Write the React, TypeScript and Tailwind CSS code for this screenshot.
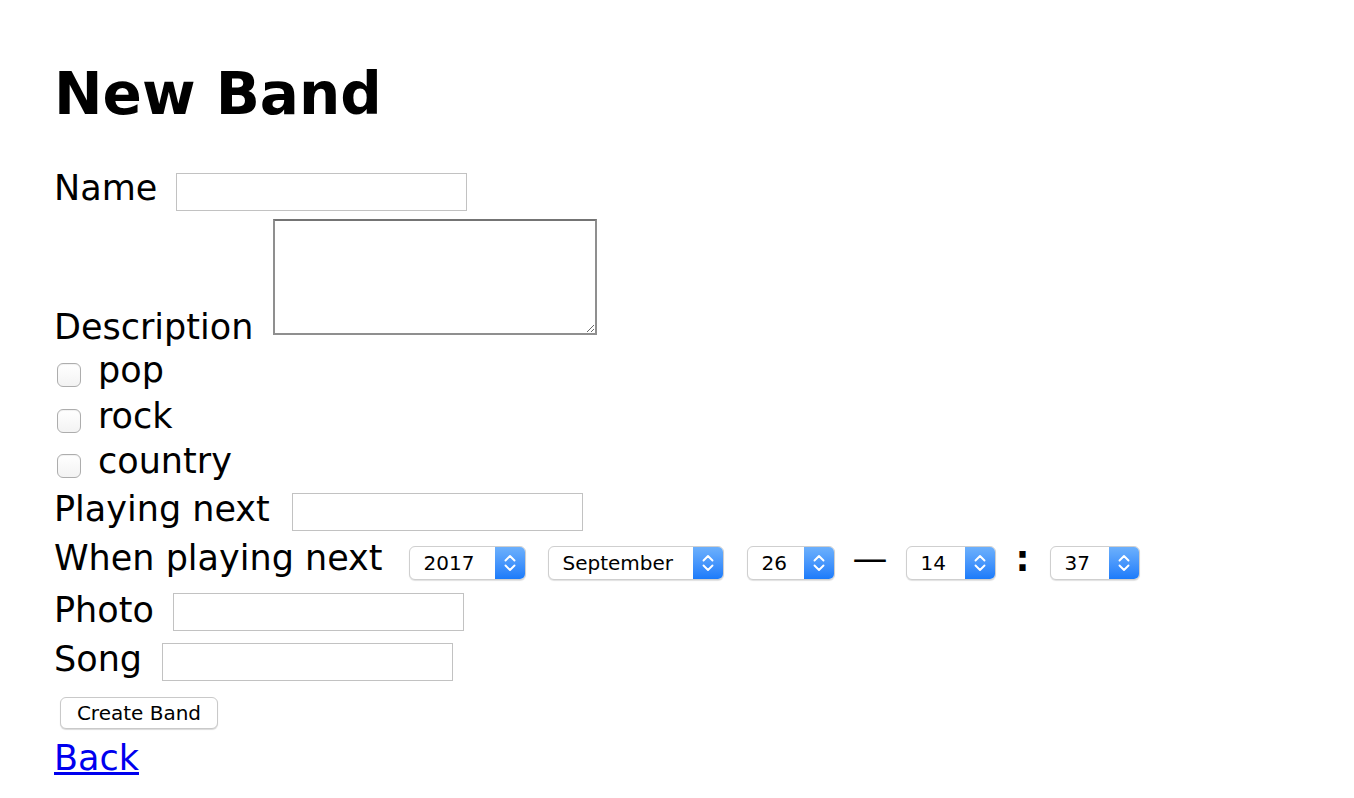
import React from "react";

function TextInput({ className = "" }: { className?: string }) {
  return (
    <input
      type="text"
      className={`h-[38px] w-[291px] border border-[#c2c2c2] bg-white px-1 outline-none ${className}`}
    />
  );
}

function Checkbox() {
  return (
    <span className="block size-[24px] rounded-[6px] border border-[#adadad] bg-gradient-to-b from-white to-[#f3f3f3] shadow-[inset_0_1px_1px_rgba(0,0,0,0.06)]" />
  );
}

function Chevrons() {
  return (
    <svg width="14" height="22" viewBox="0 0 14 22" fill="none" stroke="white" strokeWidth="1.9" strokeLinecap="round" strokeLinejoin="round">
      <path d="M2.5 8.5 L7 4 L11.5 8.5" />
      <path d="M2.5 13.5 L7 18 L11.5 13.5" />
    </svg>
  );
}

function Select({ value, w }: { value: string; w: string }) {
  return (
    <div
      className={`flex h-[34px] ${w} overflow-hidden rounded-[6px] border border-[#cfcfcf] bg-white shadow-[0_1px_1px_rgba(0,0,0,0.12)]`}
    >
      <span className="flex flex-1 items-center pl-[14px] text-[20px] text-black [font-family:'DejaVu_Sans',sans-serif]">
        {value}
      </span>
      <span className="flex w-[30px] items-center justify-center bg-gradient-to-b from-[#6cb0fc] to-[#1b7bfa]">
        <Chevrons />
      </span>
    </div>
  );
}

export default function App() {
  return (
    <div className="min-h-[798px] w-full bg-white pl-[54px] text-black [font-family:'DejaVu_Sans',Verdana,sans-serif]">
      <h1 className="pt-[60px] text-[58px] font-bold leading-[68px]">New Band</h1>

      <form className="mt-[42px] text-[35px] leading-[40px]">
        <div className="flex h-[44px] items-start">
          <label className="mt-[-2px]">Name</label>
          <TextInput className="ml-[19px] mt-[3px]" />
        </div>

        <div className="mt-[2px] flex h-[128px] items-end">
          <label className="mb-[-3px]">Description</label>
          <textarea className="mb-[9px] ml-[20px] h-[116px] w-[324px] border-2 border-[#8f8f8f] border-t-[#747474] bg-white outline-none" />
        </div>

        {[
          ["pop", "h-[46px]"],
          ["rock", "h-[45px]"],
          ["country", "h-[46px]"],
        ].map(([t, h]) => (
          <div key={t} className={`flex ${h} items-start`}>
            <span className="ml-[3px] mt-[19px]">
              <Checkbox />
            </span>
            <label className="ml-[17px] mt-[6px]">{t}</label>
          </div>
        ))}

        <div className="flex h-[50px] items-start">
          <label className="mt-[8px]">Playing next</label>
          <TextInput className="ml-[22px] mt-[12px]" />
        </div>

        <div className="flex h-[50px] items-start">
          <label className="mt-[7px]">When playing next</label>
          <div className="ml-[26px] mt-[15px] flex items-center">
            <Select value="2017" w="w-[117px]" />
            <span className="ml-[22px]">
              <Select value="September" w="w-[176px]" />
            </span>
            <span className="ml-[23px]">
              <Select value="26" w="w-[88px]" />
            </span>
            <span className="mx-[18px] mt-[-8px]">—</span>
            <Select value="14" w="w-[90px]" />
            <span className="mx-[20px] mt-[-8px] font-bold">:</span>
            <Select value="37" w="w-[90px]" />
          </div>
        </div>

        <div className="flex h-[50px] items-start">
          <label className="mt-[9px]">Photo</label>
          <TextInput className="ml-[19px] mt-[12px]" />
        </div>

        <div className="flex h-[50px] items-start">
          <label className="mt-[8px]">Song</label>
          <TextInput className="ml-[20px] mt-[12px]" />
        </div>

        <div className="mt-[16px] flex">
          <button
            type="button"
            className="ml-[6px] h-[32px] w-[158px] rounded-[6px] border border-[#c9c9c9] bg-white text-[20px] leading-none shadow-[0_1px_1px_rgba(0,0,0,0.15)] [font-family:'DejaVu_Sans',sans-serif]"
          >
            Create Band
          </button>
        </div>
      </form>

      <a href="#" className="mt-[9px] block w-fit text-[35px] leading-[40px] text-[#0000ee] underline">
        Back
      </a>
    </div>
  );
}
